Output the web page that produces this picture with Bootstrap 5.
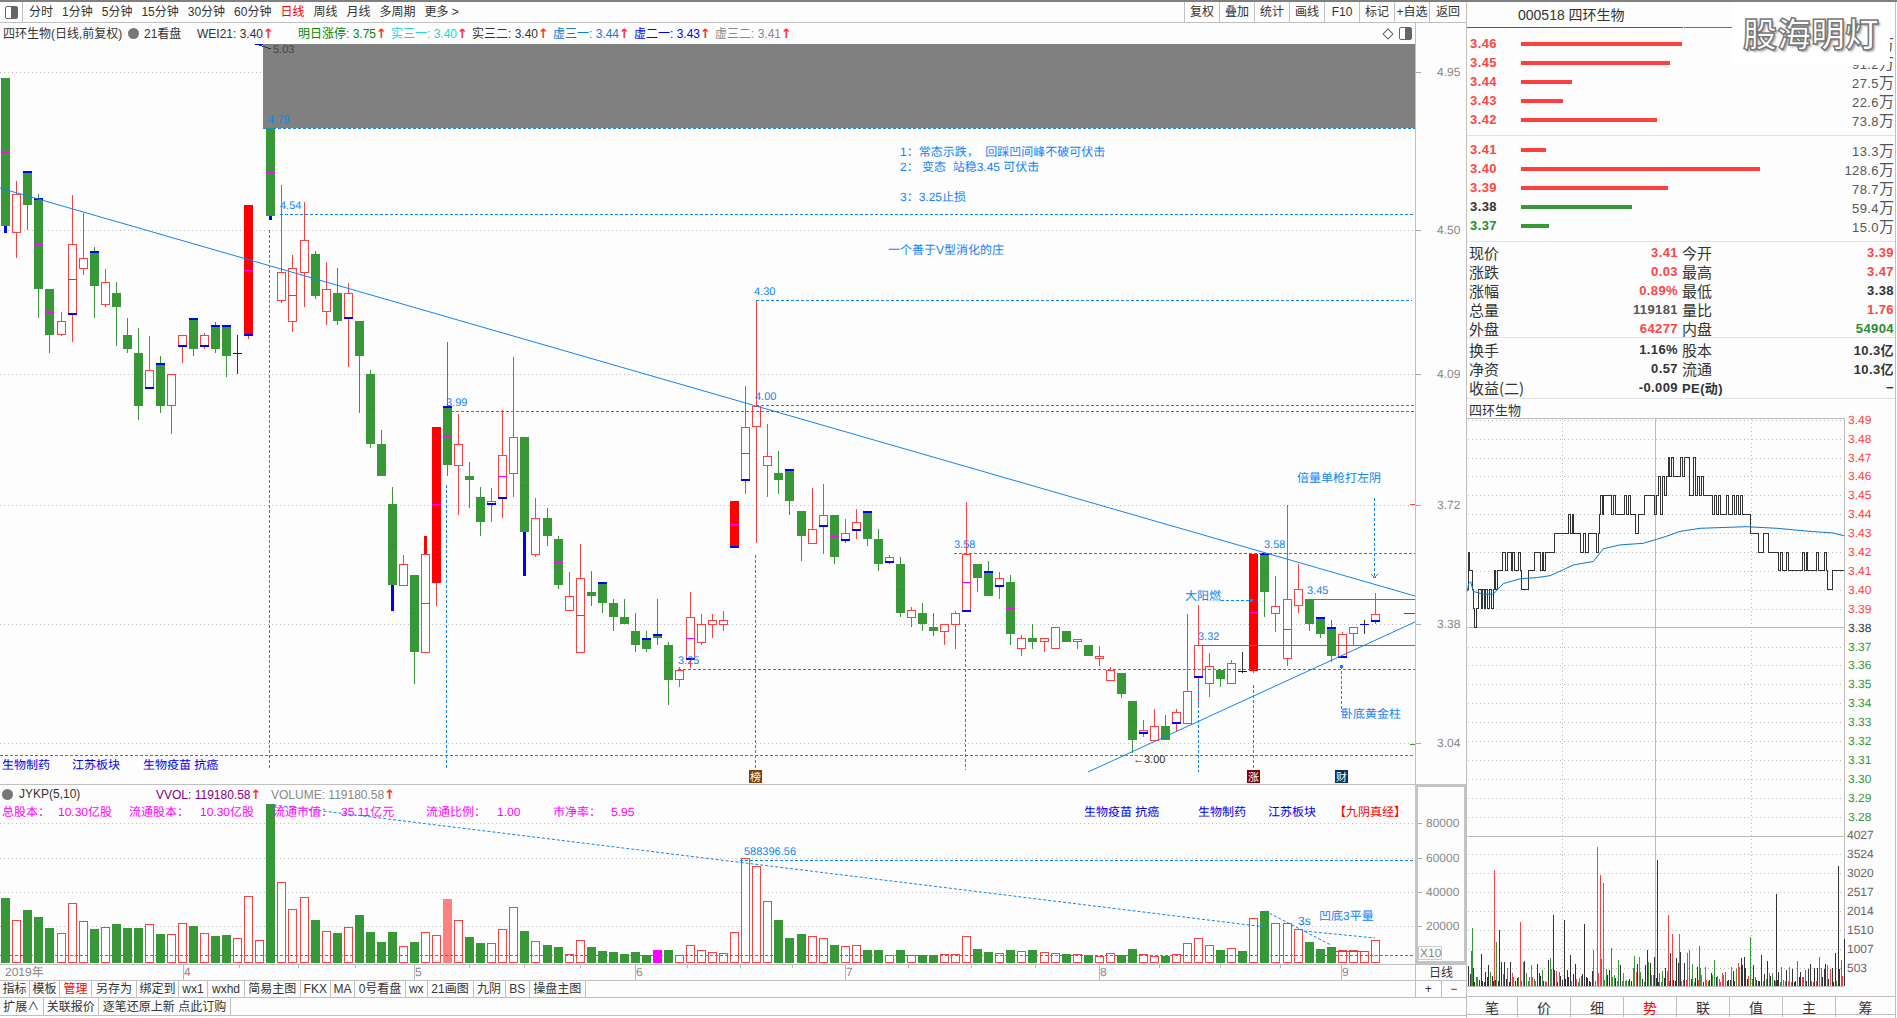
<!DOCTYPE html>
<html lang="zh-CN">
<head>
  <meta charset="UTF-8">
  <title>四环生物 日线</title>
  <link href="https://cdn.jsdelivr.net/npm/bootstrap@5.3.0/dist/css/bootstrap.min.css" rel="stylesheet">
  <style>
    html, body { margin: 0; height: 100%; overflow: hidden; background: #fdfdfd; }
    body { font: 12px "Liberation Sans", "Noto Sans CJK SC", sans-serif; color: #333; line-height: 1; }
    svg { display: block; shape-rendering: crispEdges; }
    svg text { font: 12px "Liberation Sans", "Noto Sans CJK SC", sans-serif; text-rendering: geometricPrecision; }
    .app-root { width: 1897px; height: 1018px; border-top: 2px solid #808080; }
    .left-col { width: 1466px; flex: none; }
    .plot-col { width: 1415px; flex: none; }
    .axis-col { width: 51px; flex: none; border-left: 1px solid #c0c0c0; }

    .tool-bar { height: 21px; border-bottom: 1px solid #c0c0c0; }
    .tool-panel { width: 23px; border-right: 1px solid #c0c0c0; }
    .panel-ico { width: 13px; height: 13px; border: 1px solid #666; border-radius: 2px; background: linear-gradient(90deg, #fff 50%, #666 50%); }
    .tool-links { padding-left: 6px; gap: 9px; }
    .tool-cell { width: 35px; border-left: 1px solid #c0c0c0; }
    .tool-cell:last-child { width: 37px; }
    .hot { color: #f00; }

    .info-bar { height: 21px; display: grid; grid-template-columns: 125px 16px 53px 101px 93px 81px 81px 81px 81px 100px 1fr; padding-left: 3px; color: #333; align-items: center; }
    .info-end { gap: 7px; padding-right: 3px; }
    .diamond { width: 8px; height: 8px; border: 1px solid #666; transform: rotate(45deg); }
    .dot-ico { width: 11px; height: 11px; border-radius: 50%; background: #777; }
    .up { color: #f33; font: 700 13px "DejaVu Sans", sans-serif; }
    .c-green { color: #080; } .c-cyan { color: #1cd6d6; } .c-sky { color: #0a7fd8; } .c-blue { color: #00f; } .c-gray { color: #888; } .c-purple { color: #800080; }

    .sep-top { border-top: 1px solid #c0c0c0; }
    .vol-head { height: 19px; display: grid; grid-template-columns: 17px 137px 115px 1fr; padding-left: 2px; align-items: center; }
    .vol-axis { height: 180px; border: 3px solid #c4c4c4; border-right-width: 2px; margin-left: -1px; }
    .date-row { height: 16px; }
    .date-cell { width: 51px; flex: none; border-left: 1px solid #c0c0c0; }
    .tab-row { height: 17px; border-top: 1px solid #c0c0c0; }
    .tab-one { display: grid; grid-template-columns: 30px 30px 32px 45px 42px 29px 37px 55.5px 30.5px 24px 51px 21.5px 46px 32px 24.5px 55.5px; }
    .tab-two { display: grid; grid-template-columns: 43.5px 55.5px 132px; height: 19px; border-bottom: 1px solid #c0c0c0; }
    .tab-cell { border-right: 1px solid #c0c0c0; }
    .zoom-cell { width: 51px; flex: none; border-left: 1px solid #c0c0c0; }
    .zoom-cell > div { flex: 1; height: 100%; }
    .zoom-cell > div + div { border-left: 1px solid #c0c0c0; }

    .side-col { width: 430px; flex: none; border-left: 1px solid #c0c0c0; position: relative; }
    .side-inner { width: 429px; border-right: 1px solid #c0c0c0; height: 100%; }
    .stock-head { height: 25px; padding-left: 51px; font-size: 14px; color: #333; }
    .head-line { height: 1px; background: linear-gradient(90deg, #d8146e 0 216px, #fdfdfd 216px 217px, #389838 217px 265px, #fdfdfd 265px); }
    .logo-box { position: absolute; left: 265px; top: 0; width: 158px; height: 63px; background: #fff; font: 700 34px "Noto Sans CJK SC", sans-serif; color: #fff; -webkit-text-stroke: 1.5px #777; text-shadow: 2px 2px 2px #aaa; padding-bottom: 3px; }
    .book-a { height: 108px; padding-top: 6px; }
    .book-b { height: 106px; padding-top: 4px; }
    .book-row { height: 19px; padding-right: 1px; }
    .px { width: 54px; padding-left: 3px; }
    .num { font: 700 13px "Liberation Sans", "Noto Sans CJK SC", sans-serif; letter-spacing: .4px; }
    .bar-track { flex: 1; }
    .book-bar { height: 4px; }
    .bg-up { background: #ff4040; } .bg-dn { background: #389838; }
    .t-up { color: #f44; } .t-dn { color: #2e8b2e; } .t-mid { color: #333; } .t-soft { color: #555; }
    .vol-num { color: #555; font-size: 13px; letter-spacing: .4px; }
    .vol-num span { font: 15px "Noto Sans CJK SC", sans-serif; letter-spacing: 0; }
    .quote-box { padding-left: 2px; }
    .quote-row { height: 19px; display: grid; grid-template-columns: 34px 175px 36px 180px; align-items: center; font: 15px "Noto Sans CJK SC", sans-serif; color: #333; white-space: nowrap; }
    .quote-row .val { text-align: right; }
    .quote-row .lab2 { padding-left: 4px; }
    .q2 { height: 61px; padding-top: 1px; }
    .title-row { height: 20px; padding: 3px 0 0 2px; font-size: 13px; border-bottom: 1px solid #c0c0c0; width: 378px; }
    .minute-svg { overflow: visible; }
    .side-tabs { height: 19px; display: grid; grid-template-columns: 51px 53px 53px 53px 53px 53px 53px 1fr; border-bottom: 1px solid #c0c0c0; font: 14px "Noto Sans CJK SC", sans-serif; }
    .side-tabs div { border-right: 1px solid #c0c0c0; }
    .side-tabs div:last-child { border-right: 0; }
  </style>
</head>
<body>
  <div class="app-root d-flex">
    <div class="left-col d-flex flex-column">
      <div class="tool-bar d-flex align-items-center">
        <div class="tool-panel d-flex justify-content-center align-items-center h-100"><div class="panel-ico"></div></div>
        <div class="tool-links d-flex">
          <span>分时</span><span>1分钟</span><span>5分钟</span><span>15分钟</span><span>30分钟</span><span>60分钟</span>
          <span class="hot">日线</span><span>周线</span><span>月线</span><span>多周期</span><span>更多 &gt;</span>
        </div>
        <div class="ms-auto d-flex h-100">
          <div class="tool-cell d-flex justify-content-center align-items-center">复权</div>
          <div class="tool-cell d-flex justify-content-center align-items-center">叠加</div>
          <div class="tool-cell d-flex justify-content-center align-items-center">统计</div>
          <div class="tool-cell d-flex justify-content-center align-items-center">画线</div>
          <div class="tool-cell d-flex justify-content-center align-items-center">F10</div>
          <div class="tool-cell d-flex justify-content-center align-items-center">标记</div>
          <div class="tool-cell d-flex justify-content-center align-items-center">+自选</div>
          <div class="tool-cell d-flex justify-content-center align-items-center">返回</div>
        </div>
      </div>

      <div class="d-flex">
        <div class="plot-col">
          <div class="info-bar">
            <span>四环生物(日线,前复权)</span>
            <span class="dot-ico"></span>
            <span>21看盘</span>
            <span>WEI21: 3.40<b class="up">↑</b></span>
            <span class="c-green">明日涨停: 3.75<b class="up">↑</b></span>
            <span class="c-cyan">实三一: 3.40<b class="up">↑</b></span>
            <span>实三二: 3.40<b class="up">↑</b></span>
            <span class="c-sky">虚三一: 3.44<b class="up">↑</b></span>
            <span class="c-blue">虚二一: 3.43<b class="up">↑</b></span>
            <span class="c-gray">虚三二: 3.41<b class="up">↑</b></span>
            <span class="info-end d-flex justify-content-end align-items-center"><span class="diamond"></span><span class="panel-ico"></span></span>
          </div>
          <svg id="mainChart" width="1415" height="740" viewBox="0 44 1415 740"></svg>
          <div class="sep-top vol-head">
            <span class="dot-ico"></span>
            <span>JYKP(5,10)</span>
            <span class="c-purple">VVOL: 119180.58<b class="up">↑</b></span>
            <span class="c-gray">VOLUME: 119180.58<b class="up">↑</b></span>
          </div>
          <svg id="volChart" width="1415" height="161" viewBox="0 803 1415 161"></svg>
        </div>
        <div class="axis-col">
          <svg id="priceAxis" width="50" height="761" viewBox="1416 23 50 761"></svg>
          <div class="vol-axis"><svg id="volAxis" width="46" height="174" viewBox="1419 787 46 174"></svg></div>
        </div>
      </div>

      <div class="date-row d-flex sep-top">
        <svg id="dateAxis" width="1415" height="15" viewBox="0 965 1415 15"></svg>
        <div class="date-cell d-flex justify-content-center align-items-center">日线</div>
      </div>
      <div class="tab-row d-flex">
        <div class="plot-col tab-one text-center align-items-stretch">
          <div class="tab-cell d-flex justify-content-center align-items-center">指标</div>
          <div class="tab-cell d-flex justify-content-center align-items-center">模板</div>
          <div class="tab-cell d-flex justify-content-center align-items-center hot">管理</div>
          <div class="tab-cell d-flex justify-content-center align-items-center">另存为</div>
          <div class="tab-cell d-flex justify-content-center align-items-center">绑定到</div>
          <div class="tab-cell d-flex justify-content-center align-items-center">wx1</div>
          <div class="tab-cell d-flex justify-content-center align-items-center">wxhd</div>
          <div class="tab-cell d-flex justify-content-center align-items-center">简易主图</div>
          <div class="tab-cell d-flex justify-content-center align-items-center">FKX</div>
          <div class="tab-cell d-flex justify-content-center align-items-center">MA</div>
          <div class="tab-cell d-flex justify-content-center align-items-center">0号看盘</div>
          <div class="tab-cell d-flex justify-content-center align-items-center">wx</div>
          <div class="tab-cell d-flex justify-content-center align-items-center">21画图</div>
          <div class="tab-cell d-flex justify-content-center align-items-center">九阴</div>
          <div class="tab-cell d-flex justify-content-center align-items-center">BS</div>
          <div class="tab-cell d-flex justify-content-center align-items-center">操盘主图</div>
        </div>
        <div class="zoom-cell d-flex">
          <div class="d-flex justify-content-center align-items-center">+</div>
          <div class="d-flex justify-content-center align-items-center">−</div>
        </div>
      </div>
      <div class="sep-top tab-two">
        <div class="tab-cell d-flex justify-content-center align-items-center">扩展∧</div>
        <div class="tab-cell d-flex justify-content-center align-items-center">关联报价</div>
        <div class="tab-cell d-flex justify-content-center align-items-center">逐笔还原上新 点此订购</div>
      </div>
    </div>

    <div class="side-col">
      <div class="side-inner d-flex flex-column">
        <div class="stock-head d-flex align-items-center">000518 四环生物</div>
        <div class="head-line"></div>
        <div class="logo-box d-flex justify-content-center align-items-center">股海明灯</div>
        <div class="book-a border-bottom" id="bookA"></div>
        <div class="book-b border-bottom" id="bookB"></div>
        <div class="quote-box border-bottom">
          <div class="quote-row"><span>现价</span><span class="val num t-up">3.41</span><span class="lab2">今开</span><span class="val num t-up">3.39</span></div>
          <div class="quote-row"><span>涨跌</span><span class="val num t-up">0.03</span><span class="lab2">最高</span><span class="val num t-up">3.47</span></div>
          <div class="quote-row"><span>涨幅</span><span class="val num t-up">0.89%</span><span class="lab2">最低</span><span class="val num t-mid">3.38</span></div>
          <div class="quote-row"><span>总量</span><span class="val num t-soft">119181</span><span class="lab2">量比</span><span class="val num t-up">1.76</span></div>
          <div class="quote-row"><span>外盘</span><span class="val num t-up">64277</span><span class="lab2">内盘</span><span class="val num t-dn">54904</span></div>
        </div>
        <div class="quote-box q2 border-bottom">
          <div class="quote-row"><span>换手</span><span class="val num">1.16%</span><span class="lab2">股本</span><span class="val num">10.3亿</span></div>
          <div class="quote-row"><span>净资</span><span class="val num">0.57</span><span class="lab2">流通</span><span class="val num">10.3亿</span></div>
          <div class="quote-row"><span>收益(二)</span><span class="val num">-0.009</span><span class="lab2 num">PE(动)</span><span class="val num">−</span></div>
        </div>
        <div class="title-row d-flex align-items-center">四环生物</div>
        <svg id="minuteChart" class="minute-svg" width="428" height="577" viewBox="1467 421 428 577"></svg>
        <div class="side-tabs sep-top text-center">
          <div>笔</div><div>价</div><div>细</div><div class="hot">势</div><div>联</div><div>值</div><div>主</div><div>筹</div>
        </div>
      </div>
    </div>
  </div>

  <script src="https://cdn.jsdelivr.net/npm/bootstrap@5.3.0/dist/js/bootstrap.bundle.min.js"></script>
  <script>
    const GREEN = "#389838", RED = "#ff4040", LINE = "#1184f5", GRID = "#bdbdbd";
    const rect = (x, y, w, h, c) => `<rect x="${x}" y="${y}" width="${w}" height="${h}" fill="${c}"/>`;
    const line = (x1, y1, x2, y2, c, dash) =>
      `<line x1="${x1}" y1="${y1}" x2="${x2}" y2="${y2}" stroke="${c}"${dash ? ` stroke-dasharray="${dash}"` : ""}/>`;
    const txt = (x, y, s, c, size) =>
      `<text x="${x}" y="${y + 4}" fill="${c}"${size ? ` style="font-size:${size}px"` : ""}>${s}</text>`;
    const dashH = (x1, x2, y) => line(x1, y + .5, x2, y + .5, LINE, "3 2");
    const dashV = (x, y1, y2) => line(x + .5, y1, x + .5, y2, LINE, "3 2");
    const cx = i => Math.round(5.3 + 11.045 * i);

    // kind, body top, body bottom, wick top, wick bottom, magenta tick, blue tick
    const candles = [
      ['g',78,226,78,226,152,0],['r',194,233,181,258,0,0],['g',171,205,171,230,0,171],['g',198,289,194,318,244,198],
      ['g',289,335,289,353,312,0],['r',321,335,312,336,0,0],['r',244,314,195,342,279,313],['r',258,269,213,275,0,0],
      ['g',251,286,247,318,0,251],['r',282,305,269,307,0,0],['g',293,307,282,346,0,0],['g',335,349,318,353,0,0],
      ['g',353,406,328,420,379,0],['r',370,388,336,388,0,387],['g',363,406,356,413,0,363],['r',374,406,374,434,0,0],
      ['r',335,346,335,363,0,345],['g',318,349,318,356,0,318],['r',335,346,333,349,0,345],['g',325,349,322,353,0,325],
      ['g',325,356,325,377,0,325],['d',353,353,335,374,0,353],['R',205,335,205,339,270,334],null,
      ['g',128,216,128,216,172,0],['r',272,301,185,303,0,0],['r',268,322,255,332,295,0],['r',240,273,202,307,0,0],
      ['g',254,296,251,299,0,0],['r',289,312,262,325,0,0],['g',293,321,268,325,0,0],['r',293,318,283,367,0,317],
      ['g',321,356,321,413,0,0],['g',374,444,370,448,409,0],['g',444,476,430,476,0,0],['g',504,585,487,585,545,0],
      ['r',564,586,555,586,0,0],['g',575,652,575,684,613,0],['r',554,653,554,653,603,0],['R',427,583,427,606,504,0],
      ['g',406,465,342,476,436,406],['r',444,466,414,515,0,0],['g',476,480,462,508,0,0],['g',497,522,487,536,0,0],
      ['r',501,504,488,522,0,503],['r',455,498,410,518,476,497],['r',437,474,357,497,0,0],['g',437,532,437,532,485,0],
      ['r',518,555,498,557,0,0],['g',518,536,508,546,0,0],['g',539,585,536,589,562,0],['r',596,611,572,611,0,0],
      ['r',578,653,544,653,615,0],['g',592,596,571,606,0,0],['g',582,603,582,613,0,582],['g',603,617,599,631,0,0],
      ['g',617,624,599,624,0,0],['g',631,645,613,652,0,0],['g',638,649,631,652,0,638],['g',634,638,599,645,0,634],
      ['g',645,680,642,705,663,0],['r',670,680,667,687,0,0],['r',617,659,592,668,638,658],['r',624,643,614,645,0,0],
      ['r',620,625,614,638,0,0],['r',620,625,611,631,0,0],['R',501,547,501,547,524,546],['r',427,480,386,494,453,479],
      ['r',406,427,300,543,0,0],['r',456,466,424,497,0,0],['g',473,480,451,494,0,0],['g',469,501,469,515,0,469],
      ['g',511,536,511,561,0,0],['r',529,544,488,544,0,0],['r',515,526,484,554,0,525],['g',515,557,515,564,536,0],
      ['r',533,540,519,543,0,539],['r',522,530,509,539,0,529],['g',511,539,511,546,0,511],['g',539,564,529,571,0,0],
      ['r',557,562,555,564,0,561],['g',564,613,557,617,589,0],['r',610,618,607,627,0,0],['g',613,624,603,631,0,0],
      ['g',627,631,613,636,0,0],['r',624,632,624,645,0,0],['r',613,625,611,649,0,0],['r',554,611,502,611,582,610],
      ['g',564,578,564,592,0,0],['g',571,596,561,596,0,571],['r',578,586,572,599,0,585],['g',582,634,575,645,608,0],
      ['r',638,649,635,656,0,0],['g',638,642,624,649,0,0],['r',638,642,638,652,0,0],['r',627,649,627,649,0,0],
      ['g',631,642,631,642,0,0],['r',639,642,639,649,0,0],['g',645,656,645,656,0,0],['r',656,659,646,666,0,0],
      ['r',670,681,667,681,0,0],['g',673,694,673,698,0,0],['g',701,740,701,753,721,0],['r',730,733,720,737,0,732],
      ['r',726,741,709,741,0,0],['g',726,740,715,740,0,0],['r',712,723,709,732,0,722],['r',691,724,614,724,0,0],
      ['r',645,677,605,707,0,676],['r',666,684,653,697,0,0],['g',670,679,670,687,0,0],['r',663,684,660,684,0,0],
      ['d',671,671,652,673,0,671],['R',554,671,554,673,612,0],['g',553,592,553,617,573,553],['r',606,614,576,632,0,0],
      ['r',599,659,505,666,629,0],['r',589,606,564,613,0,0],['g',599,624,599,631,0,0],['g',617,634,617,638,0,617],
      ['g',627,656,620,662,0,627],['r',634,657,632,657,0,656],['r',627,634,627,645,0,0],['d',624,624,620,634,0,624],
      ['r',614,621,593,624,0,620]
    ];
    const thickWicks = [[0,226,233,"#00f"],[24,216,220,"#00f"],[35,585,611,"#00f"],[47,532,576,"#00f"],[38,536,554,"#f00"]];

    // top of each volume bar in the crop's coordinates
    const volTops = [684,751,720,741,774,790,700,754,777,772,762,774,774,763,792,793,760,768,790,798,795,805,679,811,402,637,718,682,750,784,789,772,735,786,816,786,829,816,787,796,687,751,801,819,820,778,712,783,814,825,831,853,811,831,843,846,852,846,855,840,840,855,826,841,847,849,787,565,589,694,750,804,792,799,805,825,829,826,840,840,855,840,855,855,855,853,853,799,837,846,850,840,844,840,847,850,852,853,855,858,850,855,837,853,858,858,853,820,804,826,840,835,843,745,723,760,760,778,816,837,831,841,841,844,811];
    const volKinds = "grgggrrrgr" + "gggrgrrgrg" + "grrrgrrrgr" + "grggggrgrr" + "srggrrrgrg" + "grrggggggm" + "grrrrrrrrr" +
      "gggrrgrrgg" + "rgrggrrrgg" + "rgrgrrgrgr" + "rggrrgrrrr" + "grgrgrrrgg" + "grrrr";

    let m = "";
    for (const y of [72, 230, 374, 505, 624, 743]) m += line(0, y + .5, 1415, y + .5, GRID, "1 3");

    candles.forEach((c, i) => {
      if (!c) return;
      const [k, top, bot, wt, wb, mag, blue] = c, x = cx(i);
      const col = k === "g" ? GREEN : k === "d" ? "#333" : k === "R" ? "#f00" : RED;
      m += rect(x, wt, 1, wb - wt, k === "R" ? RED : col);
      if (k === "r") m += `<rect x="${x - 3.5}" y="${top + .5}" width="8" height="${bot - top - 1}" fill="#fdfdfd" stroke="${RED}"/>`;
      else if (k !== "d") m += rect(x - 4, top, 9, bot - top, col);
      if (mag) m += rect(x - 4, mag, 9, 1, "#f0f");
      if (blue) m += rect(x - 4, blue, 9, k === "d" ? 1 : 2, "#00f");
    });
    thickWicks.forEach(([i, a, b, c]) => { m += rect(cx(i) - 1, a, 3, b - a, c); });

    // cover band and its labels
    m += rect(263, 44, 1152, 84, "#808080");
    m += rect(255, 44, 8, 1, "#00f") + line(259, 45, 271, 49, "#333");
    m += txt(273, 49, "5.03", "#444", 11);

    m += `<g shape-rendering="auto">${line(0, 188, 1415, 596, LINE)}${line(1088, 772, 1415, 622, LINE)}</g>`;
    m += dashH(263, 1415, 128) + dashH(280, 1415, 214) + dashH(756, 1412, 300) + dashH(756, 1415, 405) + dashH(446, 1415, 411);
    m += dashH(954, 1415, 553) + dashH(678, 1415, 669) + dashH(0, 1415, 755);
    m += line(1306, 599.5, 1415, 599.5, LINE) + line(1198, 645.5, 1415, 645.5, LINE);
    m += dashV(269, 230, 769) + dashV(446, 485, 770) + dashV(755, 555, 770) + dashV(965, 624, 770);
    m += dashV(1198, 680, 772) + dashV(1253, 685, 772) + dashV(1341, 666, 712) + dashV(1374, 498, 577);
    m += line(1371, 574, 1374.5, 578, LINE) + line(1378, 574, 1374.5, 578, LINE);
    m += dashH(1221, 1251, 600) + rect(1250, 599, 3, 3, LINE) + rect(1340, 665, 3, 3, LINE);
    m += rect(1404, 613, 11, 1, "#555") + rect(1410, 504, 5, 1, RED) + rect(1410, 744, 5, 1, GREEN);

    const tags = [
      [268,119,"4.79"],[280,205,"4.54"],[754,291,"4.30"],[755,396,"4.00"],[446,402,"3.99"],[954,544,"3.58"],
      [1264,544,"3.58"],[678,660,"3.25"],[1307,590,"3.45"],[1198,636,"3.32"]
    ];
    tags.forEach(([x, y, s]) => { m += txt(x, y, s, LINE, 11); });
    [[900,152,"1：常态示跌，&#160;&#160;回踩凹间峰不破可伏击"],[900,167,"2：&#160;变态&#160;&#160;站稳3.45 可伏击"],[900,197,"3：3.25止损"],
     [888,250,"一个善于V型消化的庄"],[1297,478,"倍量单枪打左阴"],[1341,714,"卧底黄金柱"],[1185,596,"大阳燃"]]
      .forEach(([x, y, s]) => { m += txt(x, y, s, LINE); });
    m += txt(1133, 759, "←3.00", "#333", 11);
    m += txt(2, 765, "生物制药", "#00e") + txt(72, 765, "江苏板块", "#00e") + txt(143, 765, "生物疫苗 抗癌", "#00e");
    [[749,"榜","#804000"],[1247,"涨","#800000"],[1335,"财","#003366"]].forEach(([x, s, c]) => {
      m += rect(x, 770, 13, 13, c) + `<text x="${x + 1}" y="781" fill="#fff" style="font-size:11px">${s}</text>`;
    });
    document.getElementById("mainChart").innerHTML = m;

    // volume pane
    let v = "";
    for (const y of [823, 858, 892, 926]) v += line(0, y + .5, 1415, y + .5, GRID, "1 3");
    volTops.forEach((z, i) => {
      const x = cx(i), top = Math.round(670 + z / 3), k = volKinds[i];
      if (k === "r") v += `<rect x="${x - 3.5}" y="${top + .5}" width="8" height="${962 - top}" fill="#fdfdfd" stroke="${RED}"/>`;
      else v += rect(x - 4, top, 9, 963 - top, k === "g" ? GREEN : k === "s" ? "#ff8080" : "#f0f");
    });
    v += dashH(0, 1415, 955) + dashH(740, 1415, 860);
    v += `<g shape-rendering="auto">${line(274, 805, 1265, 927, LINE, "3 2")}${line(1265, 911, 1331, 945, LINE, "3 2")}${line(1304, 931, 1375, 938, LINE, "3 2")}</g>`;
    v += line(1329, 951.5, 1368, 951.5, LINE);
    [[2,"总股本："],[58,"10.30亿股"],[129,"流通股本："],[200,"10.30亿股"],[273,"流通市值："],[341,"35.11亿元"],[426,"流通比例："],[497,"1.00"],[553,"市净率："],[611,"5.95"]]
      .forEach(([x, s]) => { v += txt(x, 812, s, "#f0f"); });
    [[1084,"生物疫苗 抗癌"],[1198,"生物制药"],[1268,"江苏板块"]].forEach(([x, s]) => { v += txt(x, 812, s, "#00e"); });
    v += txt(1334, 812, "【九阴真经】", "#f00");
    v += txt(744, 851, "588396.56", LINE, 11) + txt(1298, 921, "3s", LINE) + txt(1319, 916, "凹底3平量", LINE);
    document.getElementById("volChart").innerHTML = v;

    // price and volume axes
    let a = "";
    [[72,"4.95"],[230,"4.50"],[374,"4.09"],[505,"3.72"],[624,"3.38"],[743,"3.04"]].forEach(([y, s]) => {
      a += rect(1416, y, 5, 1, "#aaa") + txt(1437, y, s, "#888");
    });
    document.getElementById("priceAxis").innerHTML = a;
    let va = "";
    [[823,"80000"],[858,"60000"],[892,"40000"],[926,"20000"]].forEach(([y, s]) => {
      va += rect(1419, y, 4, 1, "#aaa") + txt(1427, y, s, "#888");
    });
    va += `<rect x="1419.5" y="946.5" width="23" height="13" fill="#fdfdfd" stroke="#ccc"/>` + txt(1421, 953, "X10", "#888");
    document.getElementById("volAxis").innerHTML = va;

    // date axis
    let d = "";
    [183, 414, 635, 845, 1099, 1341].forEach(x => { d += rect(x, 965, 1, 15, "#bbb"); });
    [239,298,355,469,524,580,687,740,792,908,971,1035,1159,1220,1280].forEach(x => { d += rect(x, 965, 1, 3, "#bbb"); });
    [[5,"2019年"],[184,"4"],[415,"5"],[636,"6"],[846,"7"],[1100,"8"],[1342,"9"]].forEach(([x, s]) => { d += txt(x, 972, s, "#888"); });
    document.getElementById("dateAxis").innerHTML = d;

    // order book
    const book = (rows) => rows.map(([p, w, q, t, b]) =>
      `<div class="book-row d-flex align-items-center"><span class="px num ${t}">${p}</span>` +
      `<div class="bar-track"><div class="book-bar ${b}" style="width:${w}px"></div></div>` +
      `<span class="vol-num">${q}<span>万</span></span></div>`).join("");
    document.getElementById("bookA").innerHTML = book([
      ["3.46",161,"67.2","t-up","bg-up"],["3.45",149,"91.2","t-up","bg-up"],["3.44",51,"27.5","t-up","bg-up"],
      ["3.43",42,"22.6","t-up","bg-up"],["3.42",136,"73.8","t-up","bg-up"]]);
    document.getElementById("bookB").innerHTML = book([
      ["3.41",25,"13.3","t-up","bg-up"],["3.40",239,"128.6","t-up","bg-up"],["3.39",147,"78.7","t-up","bg-up"],
      ["3.38",111,"59.4","t-mid","bg-dn"],["3.37",28,"15.0","t-dn","bg-dn"]]);

    // minute chart, coordinates read off the crop
    const mx = z => +(1460 + z / 3).toFixed(1);
    const my = c => +(421.7 + 18.9 * (49 - c)).toFixed(1);
    const mz = z => +(400 + z / 2.533).toFixed(1);
    const series = [[22,40],[25,42],[29,41],[34,41],[38,40],[41,39],[44,38],[47,38],[50,39],[55,40],[60,40],[63,39],[68,40],[72,39],[77,40],[82,39],[89,40],[93,39],[99,40],[103,41],[107,40],[112,41],[122,41],[128,42],[134,42],[137,41],[142,42],[150,42],[155,41],[158,42],[163,41],[170,41],[176,42],[181,41],[185,40],[199,40],[204,41],[218,41],[224,42],[235,42],[241,41],[246,42],[251,41],[257,42],[280,42],[284,43],[322,43],[326,44],[331,43],[336,44],[340,43],[355,43],[360,42],[366,42],[371,43],[376,42],[381,42],[385,43],[404,43],[408,42],[414,43],[418,44],[422,45],[427,44],[431,45],[450,45],[455,44],[459,45],[465,44],[488,44],[494,45],[500,44],[506,45],[512,44],[520,44],[526,43],[530,43],[535,44],[548,44],[553,45],[580,45],[583,44],[590,45],[595,46],[600,44],[606,46],[612,45],[618,46],[624,47],[628,46],[634,47],[640,46],[655,46],[660,47],[666,46],[674,47],[682,47],[688,45],[694,45],[700,47],[706,45],[712,46],[718,45],[724,46],[730,45],[750,45],[756,44],[764,45],[770,44],[776,45],[782,44],[794,44],[800,45],[806,44],[816,45],[822,44],[828,45],[834,44],[842,45],[848,44],[866,44],[870,43],[888,43],[894,42],[904,42],[909,43],[922,43],[926,42],[950,42],[956,41],[962,42],[966,41],[975,41],[980,42],[985,41],[1020,41],[1026,42],[1032,41],[1038,42],[1043,41],[1065,41],[1070,42],[1076,41],[1088,41],[1093,42],[1098,41],[1102,40],[1114,40],[1118,41],[1152,41]];
    const avg = [[22,490],[26,470],[32,465],[40,490],[70,497],[100,497],[130,470],[180,458],[230,455],[270,450],[310,435],[340,423],[400,414],[430,382],[480,372],[550,368],[590,358],[620,350],[660,338],[720,330],[860,326],[950,330],[1050,338],[1120,342],[1152,349]];

    let t = "";
    for (let c = 49; c >= 28; c--) {
      const y = Math.round(my(c));
      if (c !== 38) t += line(1468, y + .5, 1842, y + .5, GRID, "1 3");
      t += txt(1848, y, (c / 100 + 3).toFixed(2), c > 38 ? "#f44" : c < 38 ? GREEN : "#333");
    }
    ["4027","3524","3020","2517","2014","1510","1007","503"].forEach((s, i) => {
      const y = Math.round(837 + 19 * i);
      if (i) t += line(1468, y + .5, 1842, y + .5, GRID, "1 3");
      t += txt(1847, y, s, "#666");
    });
    t += line(1562.5, 421, 1562.5, 988, GRID, "1 3") + line(1751.5, 421, 1751.5, 988, GRID, "1 3");
    t += line(1655.5, 421, 1655.5, 988, "#bbb") + line(1467, 629.5, 1844, 629.5, "#bbb") + line(1467, 838.5, 1844, 838.5, "#bbb");
    t += line(1844.5, 421, 1844.5, 988, "#bbb") + line(1467, 988.5, 1844, 988.5, "#bbb");

    // small trade bars use a fixed pseudo random run, the tall ones are read off the crop
    let seed = 7;
    const rnd = () => (seed = (seed * 1103515 + 12345) % 2147483648) / 2147483648;
    for (let z = 24; z < 1150; z += 4.7) {
      const r = rnd(), h = Math.round(4 + rnd() * rnd() * 38);
      t += rect(Math.round(mx(z)), 988 - h, 1, h, r < .5 ? "#333" : r < .75 ? RED : GREEN);
    }
    [[103,1195,RED],[181,1327,RED],[412,1138,RED],[421,1208,RED],[430,1228,RED],[625,1309,RED],[637,1357,RED],[658,1357,RED],
     [118,1347,"#333"],[280,1309,"#333"],[313,1322,"#333"],[373,1332,"#333"],[591,1170,"#333"],[949,1256,"#333"],[1135,1185,"#333"],[1153,1370,"#333"],
     [37,1342,GREEN],[108,1378,GREEN],[871,1365,GREEN],[717,1388,GREEN],[453,1393,GREEN]]
      .forEach(([z, top, c]) => { t += rect(Math.round(mx(z)), Math.round(mz(top)), 1, 988 - Math.round(mz(top)), c); });

    let path = "", prev = null;
    series.forEach(([z, c]) => {
      path += prev === null ? `M${mx(z)} ${my(c)}` : `L${mx(z)} ${prev}L${mx(z)} ${my(c)}`;
      prev = my(c);
    });
    t += `<path d="${path}" fill="none" stroke="#333"/>`;
    t += `<polyline points="${avg.map(([z, y]) => mx(z) + "," + mz(y)).join(" ")}" fill="none" stroke="#0a78d0" shape-rendering="auto"/>`;
    document.getElementById("minuteChart").innerHTML = t;
  </script>
</body>
</html>
